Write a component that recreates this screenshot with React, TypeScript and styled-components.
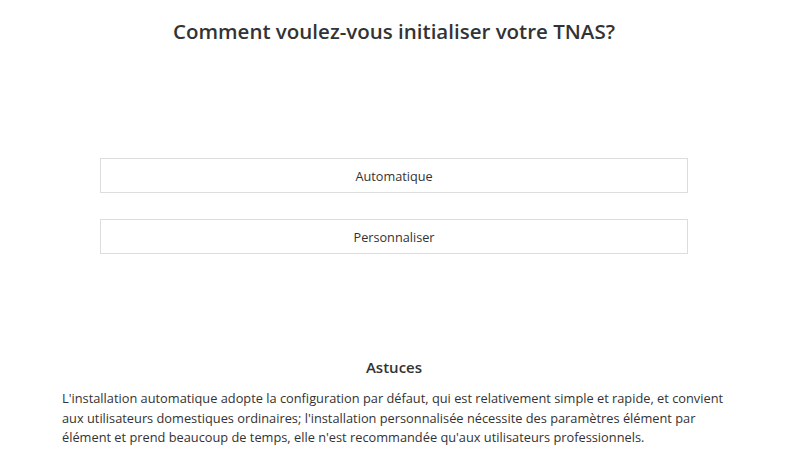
import React from 'react'
import styled, { createGlobalStyle } from 'styled-components'

const GlobalStyle = createGlobalStyle`
  html, body {
    margin: 0;
    padding: 0;
    background: #ffffff;
  }
  body {
    font-family: 'Open Sans', 'Noto Sans', 'Liberation Sans', sans-serif;
    color: #333333;
  }
`

const Page = styled.div`
  width: 788px;
  height: 463px;
  display: flex;
  flex-direction: column;
  align-items: center;
`

const Title = styled.h1`
  margin: 18px 0 0;
  font-size: 20.5px;
  font-weight: 600;
  line-height: 26px;
  color: #333333;
`

const Choices = styled.div`
  margin-top: 114px;
  width: 588px;
  display: flex;
  flex-direction: column;
  gap: 26px;
`

const Choice = styled.button`
  height: 35px;
  border: 1px solid #dddddd;
  background: #ffffff;
  font-family: inherit;
  font-size: 12.7px;
  color: #333333;
  cursor: pointer;
`

const Tips = styled.section`
  margin-top: 103px;
  width: 664px;
  display: flex;
  flex-direction: column;
  align-items: center;
`

const TipsTitle = styled.h2`
  margin: 0;
  font-size: 15px;
  font-weight: 600;
  line-height: 20px;
  color: #333333;
`

const TipsText = styled.p`
  margin: 12px 0 0;
  font-size: 12.8px;
  line-height: 19.5px;
  color: #333333;
`

export default function App() {
  return (
    <>
      <GlobalStyle />
      <Page>
        <Title>Comment voulez-vous initialiser votre TNAS?</Title>
        <Choices>
          <Choice>Automatique</Choice>
          <Choice>Personnaliser</Choice>
        </Choices>
        <Tips>
          <TipsTitle>Astuces</TipsTitle>
          <TipsText>
            L'installation automatique adopte la configuration par défaut, qui est relativement simple et rapide, et
            convient aux utilisateurs domestiques ordinaires; l'installation personnalisée nécessite des paramètres
            élément par élément et prend beaucoup de temps, elle n'est recommandée qu'aux utilisateurs professionnels.
          </TipsText>
        </Tips>
      </Page>
    </>
  )
}
